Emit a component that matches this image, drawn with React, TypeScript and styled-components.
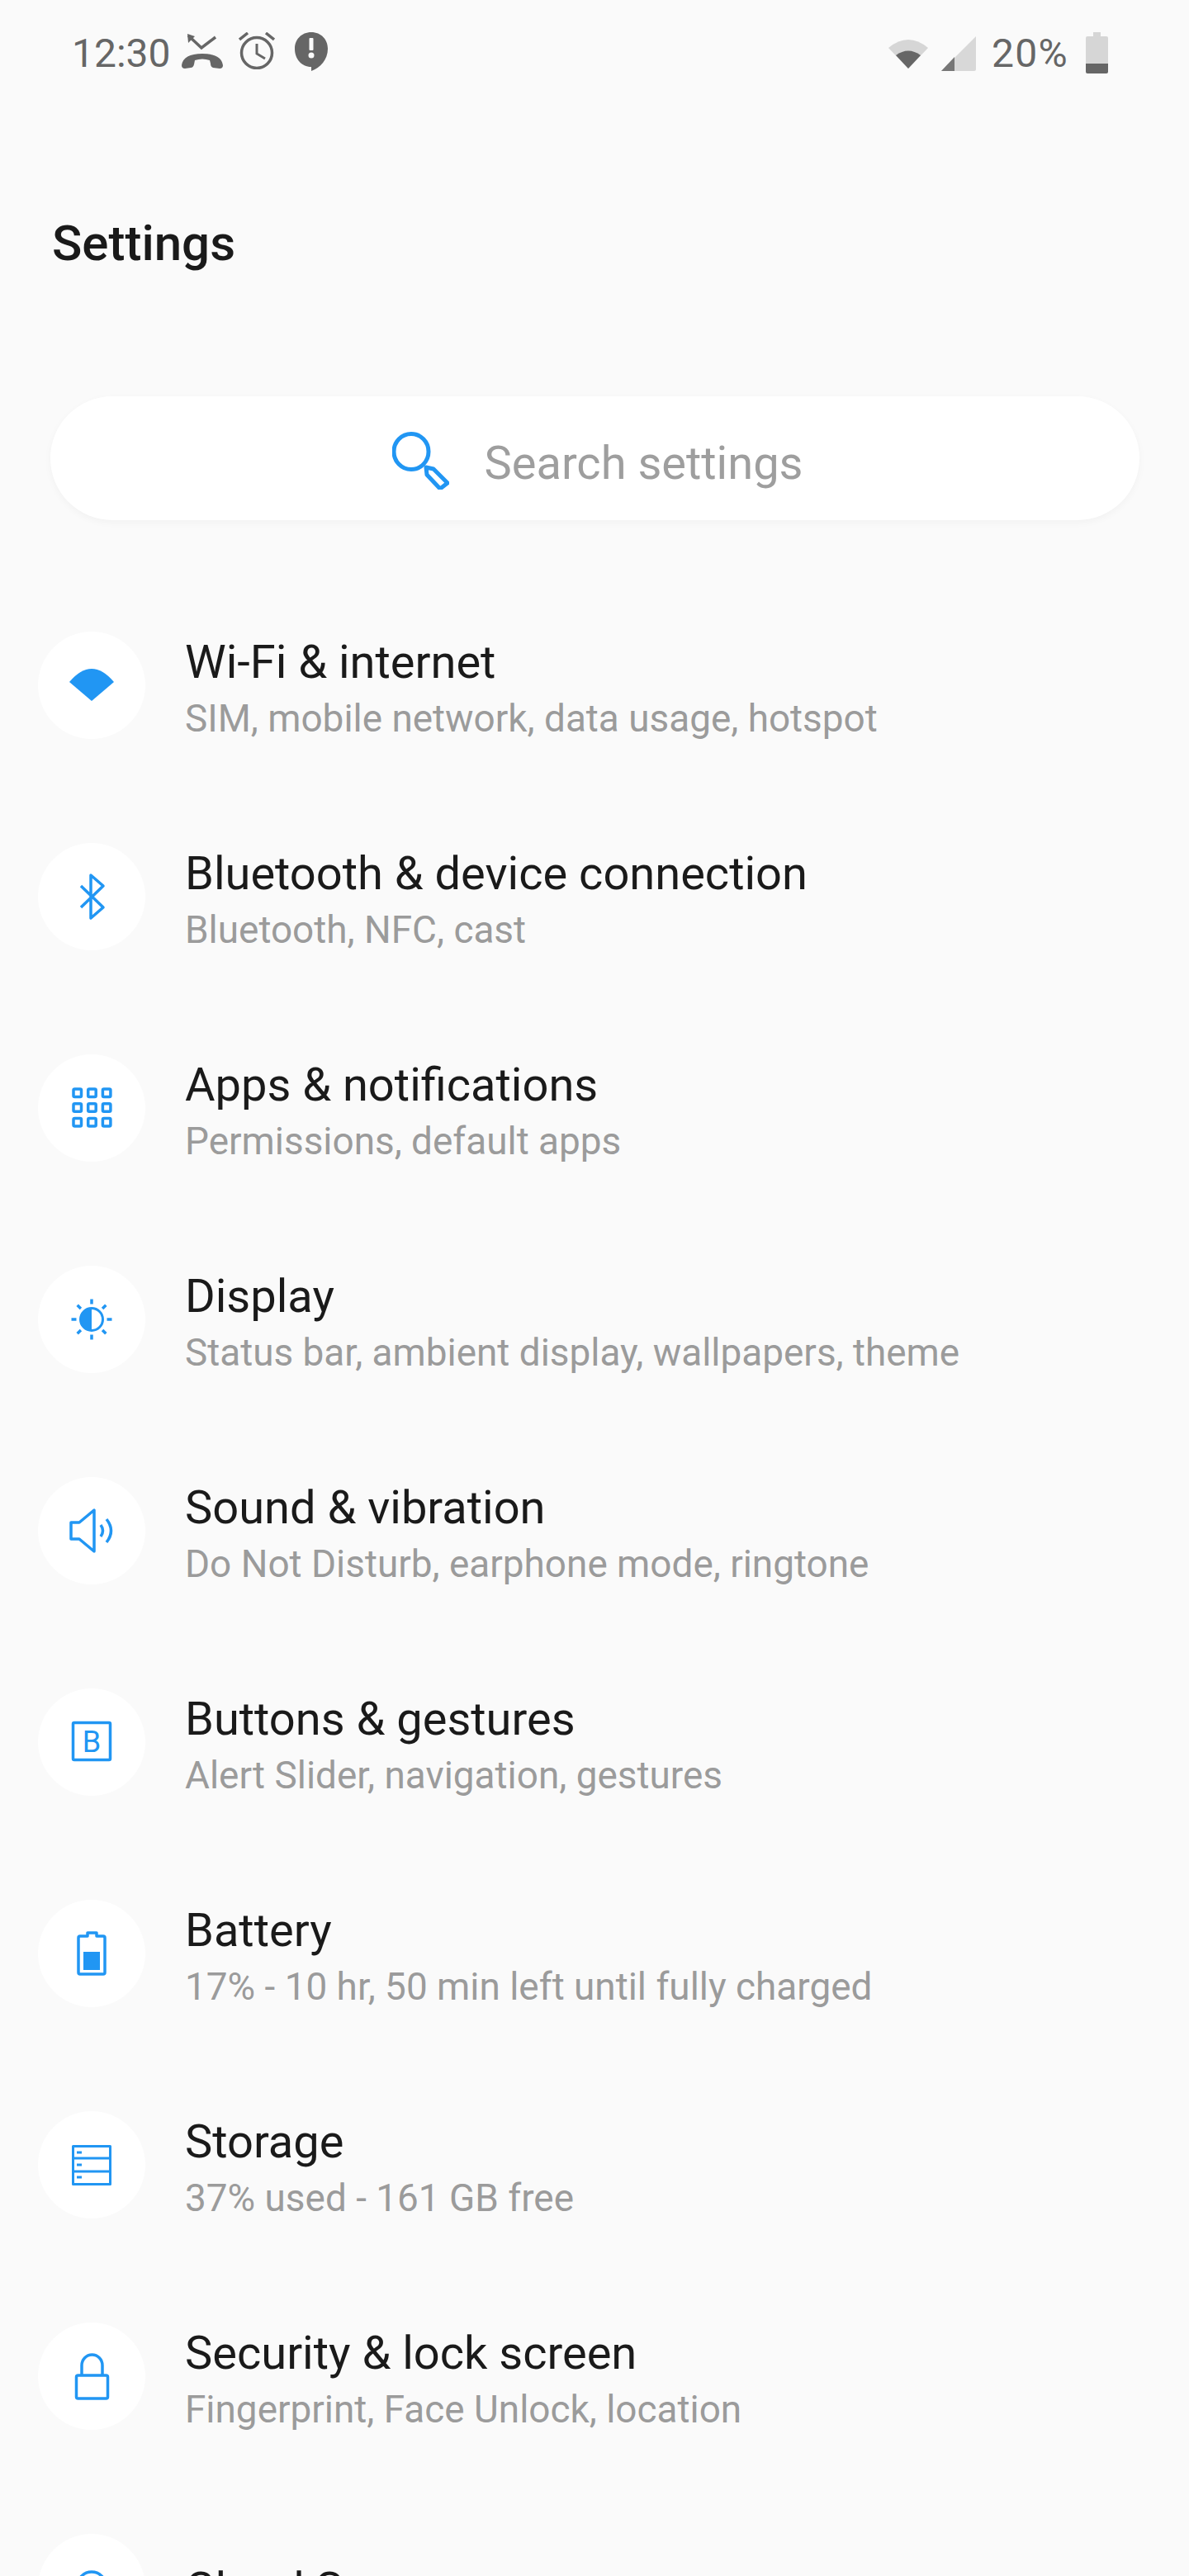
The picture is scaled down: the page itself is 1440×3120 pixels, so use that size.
import * as React from 'react'
import styled, { createGlobalStyle } from 'styled-components'

const BLUE = '#2196f3'
const STATUS = '#666666'

const GlobalStyle = createGlobalStyle`
  html, body {
    margin: 0;
    padding: 0;
    background: #fafafa;
  }
  body {
    font-family: Roboto, 'Liberation Sans', sans-serif;
  }
`

const Page = styled.div`
  width: 1440px;
  height: 3120px;
  overflow: hidden;
  background: #fafafa;
`

const StatusBar = styled.div`
  height: 100px;
  padding: 0 98px 0 87px;
  display: flex;
  align-items: flex-start;
  justify-content: space-between;
  box-sizing: border-box;
`

const StatusGroup = styled.div`
  display: flex;
  align-items: flex-start;
`

const StatusText = styled.span<{ $left?: number; $spacing?: number }>`
  font-size: 48px;
  line-height: 54px;
  margin-top: 38px;
  margin-left: ${p => p.$left || 0}px;
  letter-spacing: ${p => p.$spacing || 0}px;
  color: ${STATUS};
`

const StatusIcon = styled.svg<{ $left: number; $top: number }>`
  display: block;
  margin-left: ${p => p.$left}px;
  margin-top: ${p => p.$top}px;
`

const Title = styled.h1`
  margin: 160px 0 0 63px;
  font-size: 60px;
  line-height: 70px;
  font-weight: 500;
  color: #1a1a1a;
`

const SearchBar = styled.div`
  margin: 150px 60px 0 61px;
  height: 150px;
  padding: 6px 0 0 7px;
  box-sizing: border-box;
  border-radius: 75px;
  background: #ffffff;
  box-shadow: 0 3px 10px rgba(0, 0, 0, 0.035);
  display: flex;
  align-items: center;
  justify-content: center;
`

const SearchText = styled.span`
  margin: 6px 0 0 42px;
  font-size: 56px;
  color: #9e9e9e;
`

const List = styled.div`
  margin-top: 135px;
  padding-left: 46px;
`

const Row = styled.div`
  height: 256px;
  display: flex;
  align-items: flex-start;
`

const IconCircle = styled.div`
  flex: none;
  width: 130px;
  height: 130px;
  border-radius: 50%;
  background: #ffffff;
`

const RowBody = styled.div`
  margin-left: 48px;
`

const RowTitle = styled.div<{ $single: boolean }>`
  font-size: 56px;
  line-height: 64px;
  margin-top: ${p => (p.$single ? 35 : 5)}px;
  color: #1a1a1a;
`

const RowSub = styled.div`
  font-size: 45.9px;
  line-height: 56px;
  margin-top: 8px;
  color: #9b9b9b;
`

const icon = (body: React.ReactNode) => (
  <svg
    width="130"
    height="130"
    viewBox="0 0 130 130"
    fill="none"
    stroke={BLUE}
    strokeWidth="3.5"
    strokeLinejoin="round"
  >
    {body}
  </svg>
)

const rays = [0, 45, 90, 135, 180, 225, 270, 315]

const rows = [
  {
    title: 'Wi-Fi & internet',
    sub: 'SIM, mobile network, data usage, hotspot',
    icon: icon(<path d="M65 84 L38 61 Q65 29 92 61 Z" fill={BLUE} stroke="none" />)
  },
  {
    title: 'Bluetooth & device connection',
    sub: 'Bluetooth, NFC, cast',
    icon: icon(<path d="M52 52 L79 78 L64 91 V39 L79 52 L52 78" />)
  },
  {
    title: 'Apps & notifications',
    sub: 'Permissions, default apps',
    icon: icon(
      <>
        {[0, 1, 2].map(r =>
          [0, 1, 2].map(c => (
            <rect key={`${r}${c}`} x={43 + c * 17.7} y={42 + r * 17.7} width="9.5" height="9.5" rx="1.5" strokeWidth="3.5" />
          ))
        )}
      </>
    )
  },
  {
    title: 'Display',
    sub: 'Status bar, ambient display, wallpapers, theme',
    icon: icon(
      <>
        <circle cx="65" cy="65" r="13.5" strokeWidth="3" />
        <path d="M65 52 A13 13 0 0 0 65 78 Z" fill={BLUE} stroke="none" />
        {rays.map(a => (
          <line key={a} x1="65" y1="40.5" x2="65" y2="46.5" strokeWidth="3.5" transform={`rotate(${a} 65 65)`} />
        ))}
      </>
    )
  },
  {
    title: 'Sound & vibration',
    sub: 'Do Not Disturb, earphone mode, ringtone',
    icon: icon(
      <>
        <path d="M40 55 H50 L68 40 V90 L50 75 H40 Z" />
        <path d="M76 58 Q81 65 76 72" />
        <path d="M83 51 Q94 65 83 79" />
      </>
    )
  },
  {
    title: 'Buttons & gestures',
    sub: 'Alert Slider, navigation, gestures',
    icon: icon(
      <>
        <rect x="42.5" y="41.5" width="45" height="45" rx="1.5" />
        <text
          x="65"
          y="76.5"
          fontFamily="Roboto, sans-serif"
          fontSize="36"
          textAnchor="middle"
          fill={BLUE}
          stroke="none"
        >
          B
        </text>
      </>
    )
  },
  {
    title: 'Battery',
    sub: '17% - 10 hr, 50 min left until fully charged',
    icon: icon(
      <>
        <path d="M60 44 V40 H71 V44 H79 Q81 44 81 46 V88 Q81 90 79 90 H51 Q49 90 49 88 V46 Q49 44 51 44 Z" />
        <rect x="55" y="63" width="20" height="22" fill={BLUE} stroke="none" />
      </>
    )
  },
  {
    title: 'Storage',
    sub: '37% used - 161 GB free',
    icon: icon(
      <>
        <rect x="42.5" y="42.5" width="45" height="46" strokeWidth="3" />
        <path d="M42 57 H88 M42 73 H88" strokeWidth="3" />
        <path d="M47 50 H53 M47 65 H53 M47 80 H53" strokeWidth="3" />
      </>
    )
  },
  {
    title: 'Security & lock screen',
    sub: 'Fingerprint, Face Unlock, location',
    icon: icon(
      <>
        <rect x="46.5" y="64" width="38" height="28" rx="2" />
        <path d="M53 63 V52 A12.5 13 0 0 1 78 52 V63" />
      </>
    )
  },
  {
    title: 'Cloud Space',
    sub: '',
    icon: icon(<circle cx="65" cy="63" r="17" />)
  }
]

export default function App() {
  return (
    <Page>
      <GlobalStyle />
      <StatusBar>
        <StatusGroup>
          <StatusText>12:30</StatusText>
          <StatusIcon $left={13} $top={41} width="50" height="42" viewBox="0 0 50 42">
            <path d="M8 2 L24 17 L41 4" fill="none" stroke={STATUS} strokeWidth="3.5" />
            <path d="M7 0 L16 3 L8 11 Z" fill={STATUS} />
            <path
              d="M0 38 Q2 24 25 24 Q48 24 50 38 Q50 42 46 42 L38 41 Q35 40 35 36 L34 32 Q25 29 16 32 L15 37 Q14 41 11 41 L4 42 Q0 42 0 38 Z"
              fill={STATUS}
            />
          </StatusIcon>
          <StatusIcon $left={19} $top={39} width="44" height="45" viewBox="0 0 44 45" fill="none" stroke={STATUS}>
            <circle cx="22" cy="25" r="18.5" strokeWidth="3.5" />
            <path d="M22 14 V26 L32 32" strokeWidth="3" />
            <path d="M1 9 L11 1 M43 9 L33 1" strokeWidth="3.5" />
          </StatusIcon>
          <StatusIcon $left={24} $top={39} width="40" height="47" viewBox="0 0 40 47">
            <path d="M20 0 C32 0 40 9 40 20 C40 33 31 43 20 47 V42 C8 42 0 32 0 20 C0 9 8 0 20 0 Z" fill={STATUS} />
            <rect x="17.5" y="7" width="5" height="15" rx="1" fill="#fafafa" />
            <circle cx="20" cy="28" r="3.5" fill="#fafafa" />
          </StatusIcon>
        </StatusGroup>
        <StatusGroup>
          <StatusIcon $left={0} $top={48} width="48" height="35" viewBox="0 0 48 35">
            <path d="M24 35 L0 10 Q24 -10 48 10 Z" fill="#d6d6d6" />
            <path d="M24 35 L9 19 Q24 8 39 19 Z" fill={STATUS} />
          </StatusIcon>
          <StatusIcon $left={16} $top={43} width="42" height="43" viewBox="0 0 42 43">
            <path d="M42 1 V41 Q42 43 40 43 H0 Z" fill="#d8d8d8" />
            <path d="M16 26 V43 H0 Z" fill="#777777" />
          </StatusIcon>
          <StatusText $left={19} $spacing={1.3}>20%</StatusText>
          <StatusIcon $left={21} $top={39} width="27" height="50" viewBox="0 0 27 50">
            <path d="M9 0 H18 V5 H25 Q27 5 27 7 V38 H0 V7 Q0 5 2 5 H9 Z" fill="#d6d6d6" />
            <path d="M0 38 H27 V48 Q27 50 25 50 H2 Q0 50 0 48 Z" fill={STATUS} />
          </StatusIcon>
        </StatusGroup>
      </StatusBar>
      <Title>Settings</Title>
      <SearchBar>
        <svg width="69" height="70" viewBox="0 0 69 70" fill="none" stroke={BLUE} strokeWidth="5" strokeLinejoin="round">
          <ellipse cx="23" cy="24" rx="21" ry="21.5" />
          <path d="M41 43 L50 45 L67 62 L58 69 L42 52 Z" />
        </svg>
        <SearchText>Search settings</SearchText>
      </SearchBar>
      <List>
        {rows.map(row => (
          <Row key={row.title}>
            <IconCircle>{row.icon}</IconCircle>
            <RowBody>
              <RowTitle $single={!row.sub}>{row.title}</RowTitle>
              {row.sub && <RowSub>{row.sub}</RowSub>}
            </RowBody>
          </Row>
        ))}
      </List>
    </Page>
  )
}
